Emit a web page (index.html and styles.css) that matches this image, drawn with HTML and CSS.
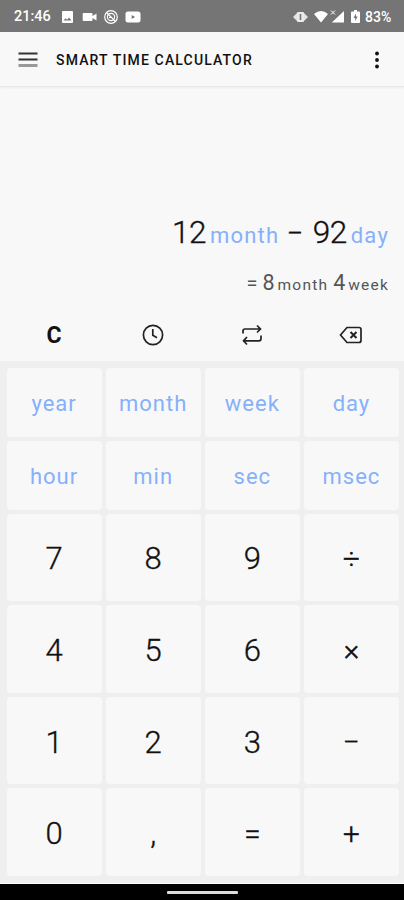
FILE: index.html
```
<!DOCTYPE html>
<html lang="en">
<head>
<meta charset="utf-8">
<title>Smart Time Calculator</title>
<link rel="stylesheet" href="styles.css">
</head>
<body>
<div class="status">
  <span class="clock">21:46</span>
  <svg class="status-left" width="84" height="16" viewBox="0 0 84 16" fill="#fff">
    <path fill-rule="evenodd" d="M3 2h9q1 0 1 1v10q0 1-1 1H3q-1 0-1-1V3q0-1 1-1zM3.500 11.500h8l-2.500-3-1.900 2.200-1.500-1.500z"/>
    <path d="M23.500 4h8q1 0 1 1v2l4-2.500v7l-4-2.500v2q0 1-1 1h-8q-.8 0-.8-1V5q0-1 .8-1z"/>
    <g fill="none" stroke="#fff" stroke-width="1.200"><circle cx="51" cy="8" r="6.300"/><circle cx="51" cy="8" r="3.600"/><path d="M47 4l8 8M49 8.500h3"/></g>
    <path fill-rule="evenodd" d="M68 2.500h10q2.500 0 2.500 2.500v6q0 2.500-2.500 2.500H68q-2.500 0-2.500-2.500V5q0-2.500 2.500-2.500zM71.700 6v4l3.400-2z"/>
  </svg>
  <svg class="status-right" width="70" height="16" viewBox="0 0 70 16" fill="#fff">
    <path d="M1 8l4-4v8zM16 8l-4-4v8z" opacity=".8"/><path fill-rule="evenodd" d="M6 3h5q1 0 1 1v8q0 1-1 1H6q-1 0-1-1V4q0-1 1-1zM7.700 5v6h1.600V5z" opacity=".85"/>
    <path d="M22 5q7-6 14 0l-7 8.500zM52 2v11.500H39.800z"/><path d="M39 1.500l4 4M43 1.500l-4 4" stroke="#fff"/>
    <path fill-rule="evenodd" d="M60 2.500h2V1h3v1.500h2q1 0 1 1v9.500q0 1-1 1h-7q-1 0-1-1V3.500q0-1 1-1zM64 4.500l-2.500 4.500h1.700v3l2.500-4.500H64z"/>
  </svg>
  <span class="battery">83%</span>
</div>
<header class="appbar">
  <svg width="20" height="16" viewBox="0 0 20 16"><path d="M.5 1.500h19M.5 7.500h19" stroke="#333" stroke-width="2"/><path d="M.5 13.500h19" stroke="#999" stroke-width="3"/></svg>
  <h1>SMART TIME CALCULATOR</h1>
  <svg class="more" width="6" height="20" viewBox="0 0 6 20" fill="#111"><circle cx="3" cy="3.500" r="1.900"/><circle cx="3" cy="10" r="1.900"/><circle cx="3" cy="16.500" r="1.900"/></svg>
</header>
<main class="display">
  <div class="expr"><span>12</span><span class="unit">month</span><span class="op">−</span><span>92</span><span class="unit">day</span></div>
  <div class="result"><span class="eq">=</span><span class="num">8</span><span class="small">month</span><span class="num">4</span><span class="small">week</span></div>
</main>
<div class="tools">
  <span class="clear">C</span>
  <svg width="24" height="24" viewBox="0 0 24 24"><circle cx="12" cy="12" r="9.600"/><path d="M11.800 6v6.200l4.200 2.500"/></svg>
  <svg width="24" height="24" viewBox="0 0 24 24"><path d="M3 10.500V8q0-2 2-2h15M17 2.500L20.500 6 17 9.500M21 12.500v3.300q0 2-2 2H4M7 14l-3.500 3.800L7 21.500"/></svg>
  <svg width="24" height="24" viewBox="0 0 24 24"><path d="M9 4.500h12q2 0 2 2v11q0 2-2 2H9L2.500 12z"/><path d="M12.500 9l6 6M18.500 9l-6 6" stroke-width="2"/></svg>
</div>
<div class="keypad">
  <button class="u">year</button><button class="u">month</button><button class="u">week</button><button class="u">day</button>
  <button class="u">hour</button><button class="u">min</button><button class="u">sec</button><button class="u">msec</button>
  <button>7</button><button>8</button><button>9</button><button class="o">÷</button>
  <button>4</button><button>5</button><button>6</button><button class="o">×</button>
  <button>1</button><button>2</button><button>3</button><button class="o">−</button>
  <button>0</button><button>,</button><button class="o">=</button><button class="o">+</button>
</div>
<footer class="nav"><span></span></footer>
</body>
</html>
```
FILE: styles.css
```
* { box-sizing: border-box; }
body {
  margin: 0;
  height: 900px;
  display: flex;
  flex-direction: column;
  background: #f8f8f8;
  color: #111;
  font-family: Roboto, sans-serif;
  overflow: hidden;
}
svg { display: block; flex: none; }
.status {
  height: 32px;
  background: #757575;
  color: #fff;
  display: flex;
  align-items: center;
  padding: 1px 12px 0 14px;
  font-size: 14.5px;
  font-weight: 500;
}
.clock { width: 46px; }
.status-right { margin-left: auto; }
.battery { width: 27px; margin-left: 3px; font-size: 14px; }
.appbar {
  height: 55px;
  display: flex;
  align-items: center;
  padding: 1px 24px 0 18px;
  border-bottom: 1px solid #e8e8e8;
  box-shadow: 0 1px 2px #0000000d;
}
h1 {
  margin: 0 0 0 18px;
  font-size: 14px;
  font-weight: 500;
  letter-spacing: 1.15px;
  white-space: nowrap;
}
.more { margin-left: auto; }
.display {
  height: 221px;
  padding: 126px 15px 0 0;
}
.expr, .result {
  display: flex;
  justify-content: flex-end;
  align-items: baseline;
  white-space: nowrap;
}
.expr { font-size: 31.5px; line-height: 40px; font-weight: 300; letter-spacing: -.5px; -webkit-text-stroke: .35px currentColor; }
.unit { color: #86b0fa; font-size: 22px; letter-spacing: 1.2px; margin-left: 4px; font-weight: 400; -webkit-text-stroke: 0; }
.op { margin: 0 10px 0 7.5px; font-size: 29px; }
.result { margin-top: 14px; font-size: 21.5px; line-height: 26px; color: #555; }
.eq { font-size: 20px; }
.num { margin-left: 5px; }
.small { font-size: 15.5px; letter-spacing: 1.2px; margin-left: 3px; }
.tools {
  height: 53px;
  padding: 0 5px 0 6px;
  display: grid;
  grid-template-columns: repeat(4, 1fr);
  place-items: center;
}
.tools svg { fill: none; stroke: #222; stroke-width: 1.7; }
.clear { font-size: 23px; font-weight: 700; margin: 1px 2px 0 0; }
.keypad {
  height: 522px;
  padding: 7px 5px 7px 6.5px;
  background: #efefef;
  display: grid;
  grid-template-columns: repeat(4, 1fr);
  grid-template-rows: 68.500px 69px repeat(4, 1fr);
  gap: 4px;
}
button {
  border: 0;
  border-radius: 4px;
  padding: 3px 0 0;
  background: #f8f8f8;
  color: #111;
  font: 300 31px Roboto, sans-serif;
  -webkit-text-stroke: .35px currentColor;
}
.u { color: #86b0fa; font-size: 22px; font-weight: 400; letter-spacing: 1px; -webkit-text-stroke: 0; }
.o { font-size: 29.5px; -webkit-text-stroke-width: .45px; }
.nav {
  flex: 1;
  background: #000;
  border-top: 1px solid #fff;
  display: flex;
  align-items: center;
  justify-content: center;
}
.nav span { width: 71px; height: 3px; margin-top: 1px; border-radius: 1px; background: #ddd; }
```
